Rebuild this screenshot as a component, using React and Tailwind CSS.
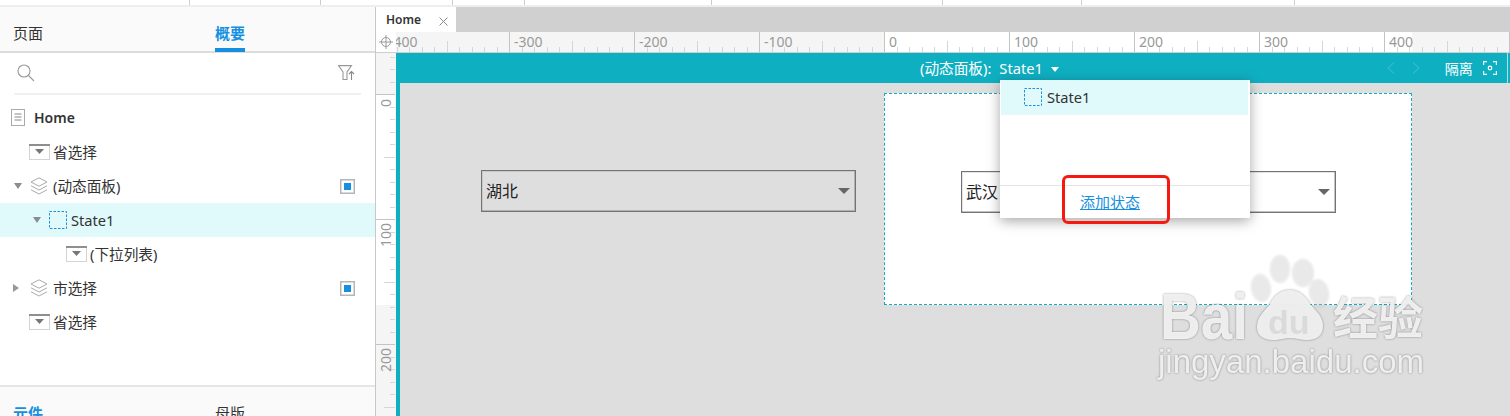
import React from "react";

const FONT = "[font-family:'Noto_Sans','Noto_Sans_CJK_SC',sans-serif]";

function DropIcon() {
  return (
    <svg width="21" height="16" viewBox="0 0 21 16" className="shrink-0">
      <rect x="0.5" y="0.5" width="20" height="15" fill="#fff" stroke="#d4d4d4" />
      <rect x="0" y="0" width="21" height="2" fill="#8f8f8f" />
      <path d="M6 5h9l-4.5 5z" fill="#777" />
    </svg>
  );
}
function Layers() {
  return (
    <svg width="18" height="19" viewBox="0 0 18 19" fill="none" stroke="#aaa" className="shrink-0">
      <path d="M9 .8 17 5l-8 4.2L1 5z" />
      <path d="M1 8.8l8 4.2 8-4.2" />
      <path d="M1 12.8 9 17l8-4.2" />
    </svg>
  );
}
function DashedBox() {
  return (
    <svg width="18" height="18" viewBox="0 0 18 18" className="shrink-0">
      <rect x="0.5" y="0.5" width="17" height="17" fill="none" stroke="#1e8fdc" strokeDasharray="2.5 1.5" />
    </svg>
  );
}
function Marker() {
  return (
    <svg width="15" height="15" viewBox="0 0 15 15" className="shrink-0">
      <rect x="0.75" y="0.75" width="13.5" height="13.5" fill="#fff" stroke="#b5b5b5" strokeWidth="1.5" />
      <rect x="4" y="4" width="7" height="7" fill="#1590e0" />
    </svg>
  );
}
function Down({ c = "#8c8c8c" }) {
  return (
    <svg width="8" height="6" viewBox="0 0 8 6" className="shrink-0"><path d="M0 0h8L4 6z" fill={c} /></svg>
  );
}
function Right() {
  return (
    <svg width="6" height="8" viewBox="0 0 6 8" className="shrink-0"><path d="M0 0l6 4-6 4z" fill="#999" /></svg>
  );
}

function Row({ pl, children, marker, active, h = "h-[34px]", gap = "gap-[4px]" }) {
  return (
    <div className={`flex items-center ${h} ${gap} ${active ? "bg-[#e0f9fa]" : ""}`} style={{ paddingLeft: pl }}>
      {children}
      {marker && <div className="ml-auto mr-[20px]"><Marker /></div>}
    </div>
  );
}

function HRuler() {
  const ticks = [];
  for (let i = 0; i < 92; i++) {
    const x = Math.round(-12 + i * 12.5) + 0.5;
    const k = i % 10;
    const y1 = k === 0 ? 0 : k === 5 ? 9 : 15;
    ticks.push(<line key={i} x1={x} x2={x} y1={y1} y2={20} stroke={k === 0 ? "#c4c4c4" : "#d6d6d6"} />);
  }
  const labels = [-400, -300, -200, -100, 0, 100, 200, 300, 400];
  return (
    <svg width="1114" height="20" className="block">
      <rect width="1114" height="20" fill="#f5f5f5" />
      <rect x="488" width="528" height="20" fill="#fff" />
      {ticks}
      {labels.map((v, i) => (
        <text key={v} x={-7 + i * 125} y="15" fontSize="14" fill="#999" fontFamily="'Noto Sans',sans-serif">{v}</text>
      ))}
    </svg>
  );
}

function VRuler() {
  const ticks = [];
  for (let i = 0; i < 30; i++) {
    const y = Math.round(3.5 + i * 12.5) + 0.5;
    const k = (i + 7) % 10;
    const x1 = k === 0 ? 0 : k === 5 ? 8 : 14;
    ticks.push(<line key={i} y1={y} y2={y} x1={x1} x2={19} stroke={k === 0 ? "#c4c4c4" : "#d6d6d6"} />);
  }
  return (
    <svg width="20" height="363" className="block shrink-0">
      <rect width="20" height="363" fill="#f5f5f5" />
      <rect y="41" width="19" height="211" fill="#fff" />
      {ticks}
      {[[0, 46], [100, 170], [200, 295]].map(([v, y]) => (
        <text key={v} fontSize="14" fill="#999" fontFamily="'Noto Sans',sans-serif" textAnchor="end"
          transform={`translate(15 ${y}) rotate(-90)`}>{v}</text>
      ))}
    </svg>
  );
}

function SelectBox({ label, className }) {
  return (
    <div className={`absolute w-[375px] h-[42px] border border-[#747474] shadow-[inset_-1px_-1px_0_rgba(120,120,120,0.45),inset_1px_1px_0_rgba(120,120,120,0.2)] flex items-center pl-[4px] pr-[5px] text-[16px] text-[#222] ${className}`}>
      <span>{label}</span>
      <svg width="12" height="6" viewBox="0 0 12 6" className="ml-auto"><path d="M0 0h12L6 6z" fill="#666" /></svg>
    </div>
  );
}

function Watermark() {
  return (
    <svg width="290" height="150" viewBox="0 0 290 150" className="absolute left-[1150px] top-[250px] pointer-events-none [filter:drop-shadow(0_0_1px_rgba(0,0,0,0.4))]">
      <g fill="#f2f2f2" fillOpacity="0.95">
        <ellipse cx="111" cy="38" rx="10" ry="14" transform="rotate(-8 111 38)" fillOpacity="0.25" />
        <ellipse cx="130" cy="19" rx="10" ry="14" fillOpacity="0.25" />
        <ellipse cx="153" cy="23" rx="11" ry="14" fillOpacity="0.25" />
        <ellipse cx="169" cy="43" rx="10" ry="14" transform="rotate(-10 169 43)" fillOpacity="0.25" />
        <path d="M140 40c-10 0-16 6-20 14-4 6-13 12-13 23 0 8 6 13 16 13 7 0 11-2 17-2s11 2 17 2c10 0 16-5 16-14 0-10-8-16-13-22-4-7-10-14-20-14z" />
        <text x="10" y="89" fontSize="64" fontWeight="700" textLength="88" lengthAdjust="spacingAndGlyphs" fontFamily="'Liberation Sans',sans-serif">Bai</text>
        <text x="183" y="85" fontSize="45" fontWeight="700" fontFamily="'Noto Sans CJK SC',sans-serif">经验</text>
        <text x="8" y="123" fontSize="33" fontFamily="'Liberation Sans',sans-serif">jingyan.baidu.com</text>
      </g>
      <text x="118" y="84" fontSize="34" fontWeight="700" fill="#dadada" fontFamily="'Liberation Sans',sans-serif">du</text>
    </svg>
  );
}

export default function App() {
  return (
    <div className={`relative w-[1510px] h-[416px] overflow-hidden flex flex-col bg-white text-[#333] ${FONT}`}>
      {/* top strip */}
      <div className="flex h-[5px] shrink-0 bg-white">
        <div className="w-[190px] border-r border-[#ccc]" />
        <div className="w-[131px] border-r border-[#ccc]" />
        <div className="w-[132px] border-r border-[#ccc]" />
        <div className="w-[72px] border-r border-[#ccc]" />
        <div className="w-[187px] border-r border-[#ccc]" />
        <div className="w-[231px] border-r border-[#ccc]" />
        <div className="w-[139px] border-r border-[#ccc]" />
        <div className="w-[213px] border-r border-[#ccc]" />
      </div>
      <div className="h-[2px] shrink-0 bg-[#eeeeee]" />

      <div className="flex flex-1 min-h-0">
        {/* left panel */}
        <aside className="w-[376px] shrink-0 border-r border-[#c8c8c8] flex flex-col">
          <div className="h-[46px] shrink-0 bg-[#fafafa] border-b-2 border-[#dcdcdc] flex text-[15px]">
            <div className="pl-[13px] w-[215px] pt-[15px] leading-[22px]">页面</div>
            <div className="w-[30px] pt-[15px] leading-[22px] font-bold text-[#1590e0] border-b-[4px] border-[#1590e0] h-[45px]">概要</div>
          </div>
          <div className="h-[42px] shrink-0 mx-[14px] border-b-2 border-[#f0f0f0] flex items-center justify-between pl-[3px] pr-[4px]">
            <svg width="18" height="18" viewBox="0 0 18 18" fill="none" stroke="#999" strokeWidth="1.1">
              <circle cx="7" cy="7" r="6" />
              <path d="M11.5 11.5 17 17" />
            </svg>
            <svg width="18" height="16" viewBox="0 0 18 16" fill="none" stroke="#999" strokeWidth="1.1" className="mr-[1px]">
              <path d="M.5.6h13L9 7v7.5H5V7z" />
              <path d="M13.5 15V7M11 9l2.5-2.5L16 9" stroke="#888" />
            </svg>
          </div>
          <div className="flex-1 min-h-0 pt-[5px] text-[14.67px] leading-none">
            <Row pl={11} h="h-[35px]" gap="gap-[8px]">
              <svg width="15" height="17" viewBox="0 0 15 17" fill="none" className="shrink-0">
                <rect x=".5" y=".5" width="13" height="16" stroke="#aaa" fill="#fff" />
                <path d="M3.5 5h7M3.5 8h7M3.5 11h7" stroke="#888" />
              </svg>
              <span className="font-semibold text-[14px]">Home</span>
            </Row>
            <Row pl={29} gap="gap-[3px]"><DropIcon /><span>省选择</span></Row>
            <Row pl={14} marker gap="gap-[8px]">
              <Down />
              <Layers />
              <span className="-ml-[3px]">(动态面板)</span>
            </Row>
            <Row pl={33} active gap="gap-[8px]">
              <Down />
              <DashedBox />
              <span className="-ml-[4px]">State1</span>
            </Row>
            <Row pl={66} gap="gap-[3px]"><DropIcon /><span>(下拉列表)</span></Row>
            <Row pl={13} marker gap="gap-[11px]">
              <Right />
              <Layers />
              <span className="-ml-[6px]">市选择</span>
            </Row>
            <Row pl={29} gap="gap-[3px]"><DropIcon /><span>省选择</span></Row>
          </div>
          <div className="h-[31px] shrink-0 bg-[#fafafa] border-t-2 border-[#e6e6e6] flex text-[15px] leading-[22px] pt-[15px]">
            <div className="pl-[13px] w-[215px] font-bold text-[#1590e0]">元件</div>
            <div>母版</div>
          </div>
        </aside>

        {/* workspace */}
        <main className="flex-1 min-w-0 flex flex-col">
          <div className="h-[25px] shrink-0 bg-[#d0d0d0] flex">
            <div className="w-[80px] bg-white flex items-center pl-[10px] text-[12px] font-semibold">
              <span>Home</span>
              <svg width="9" height="9" viewBox="0 0 9 9" className="ml-[18px] mt-[3px]" stroke="#888" fill="none"><path d="M.5.5l8 8M8.5.5l-8 8" /></svg>
            </div>
          </div>
          <div className="h-[21px] shrink-0 flex border-b border-[#cfcfcf]">
            <div className="w-[20px] bg-white flex items-center justify-center">
              <svg width="14" height="14" viewBox="0 0 14 14" fill="none" stroke="#999">
                <circle cx="7" cy="7" r="4.5" />
                <path d="M7 0v14M0 7h14" />
              </svg>
            </div>
            <HRuler />
          </div>
          <div className="flex-1 min-h-0 flex">
            <VRuler />
            <div className="relative flex-1 flex flex-col bg-[#dedede]">
              <div className="h-[30px] shrink-0 bg-[#0fafc2] flex items-center pl-[524px] text-white text-[14.67px]">
                <span>(动态面板):</span>
                <span className="ml-[8px]">State1</span>
                <svg width="8" height="5" viewBox="0 0 8 5" className="ml-[8px] mt-[2px]"><path d="M0 0h8L4 5z" fill="#fff" /></svg>
                <svg width="8" height="12" viewBox="0 0 8 12" className="ml-[328px]" fill="none" stroke="#3ec3d3"><path d="M7 .5 1 6l6 5.5" /></svg>
                <svg width="8" height="12" viewBox="0 0 8 12" className="ml-[17px]" fill="none" stroke="#3ec3d3"><path d="M1 .5 7 6l-6 5.5" /></svg>
                <span className="ml-[25px] text-[14px]">隔离</span>
                <svg width="14" height="14" viewBox="0 0 14 14" className="ml-[10px]" fill="none" stroke="#fff" strokeWidth="1.2">
                  <path d="M.6 4V.6H4M10 .6h3.4V4M13.4 10v3.4H10M4 13.4H.6V10" />
                  <circle cx="7" cy="7" r="1.8" />
                </svg>
                <div className="ml-[10px] w-[1px] h-full bg-[#a8e3ea]" />
              </div>
              <div className="relative flex-1 border-l-4 border-[#0fafc2]">
                <SelectBox label="湖北" className="left-[81px] top-[87px]" />
                <div className="absolute left-[484px] top-[10px] w-[528px] h-[212px] bg-white border border-dashed border-[#11aec2]">
                  <SelectBox label="武汉" className="left-[76px] top-[77px]" />
                </div>
              </div>
              {/* state popover */}
              <div className="absolute left-[604px] top-[27px] w-[250px] h-[138px] bg-white shadow-[0_3px_12px_rgba(0,0,0,0.35)] flex flex-col">
                <div className="h-[35px] shrink-0 ml-[1px] mr-[2px] bg-[#e0f9fa] flex items-center gap-[5px] pl-[23px] pb-[2px] text-[14.67px] text-[#333]">
                  <DashedBox />
                  <span>State1</span>
                </div>
                <div className="flex-1" />
                <div className="h-[33px] shrink-0 border-t border-[#e4e4e4] flex items-center pl-[80px] pt-[1px] text-[15px] text-[#1590e0] underline">添加状态</div>
              </div>
            </div>
          </div>
        </main>
      </div>

      <div className="absolute left-[1062px] top-[175px] w-[108px] h-[49px] rounded-[6px] border-[3px] border-[#f5190f] pointer-events-none" />
      <Watermark />
    </div>
  );
}
